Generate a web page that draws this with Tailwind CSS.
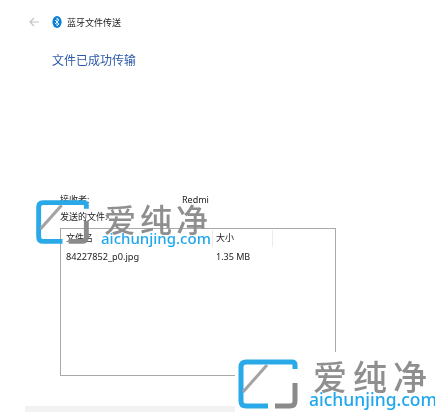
<!DOCTYPE html>
<html lang="zh-CN">
<head>
  <meta charset="UTF-8">
  <title>蓝牙文件传送</title>
  <script src="https://cdn.jsdelivr.net/npm/@tailwindcss/browser@4"></script>
</head>
<body class="bg-white w-[435px] h-[412px] overflow-hidden relative font-['Noto_Sans','Noto_Sans_CJK_SC',sans-serif] text-[#222] blur-[0.3px]">
  <div class="flex items-center h-[12px] mt-[16px] pl-[29px]">
    <svg class="w-[10px] h-[10px]" viewBox="0 0 10 10" fill="none" stroke="#c4c4c4" stroke-width="1.2"><path d="M10 5H1M5 1 1 5l4 4"/></svg>
    <svg class="w-[10px] h-[12px] ml-[13px]" viewBox="0 0 10 12"><ellipse cx="5" cy="6" rx="4.6" ry="6" fill="#0a7fd8"/><path d="M3 4l4 4-2 2V2l2 2-4 4" fill="none" stroke="#fff" stroke-width=".8"/></svg>
    <span class="ml-[5px] text-[9px] leading-[12px] pt-[1px]">蓝牙文件传送</span>
  </div>
  <h1 class="mt-[24px] ml-[52px] text-[12px] leading-[18px] text-[#2d5aa8]">文件已成功传输</h1>
  <div class="mt-[124px] ml-[60px] w-[276px] text-[9px] leading-[12px]">
    <div class="flex"><span class="w-[122px]">接收者:</span><span>Redmi</span></div>
    <div class="mt-[5px]">发送的文件:</div>
    <div class="mt-[5px] h-[148px] border border-[#a9a9a9]">
      <div class="flex h-[17px] mt-[1px]">
        <span class="w-[152px] pl-[5px] pt-[2px] border-r border-[#ececec]">文件名</span>
        <span class="w-[60px] pl-[3px] pt-[2px] border-r border-[#ececec]">大小</span>
      </div>
      <div class="flex mt-[4px]">
        <span class="w-[152px] pl-[5px] text-[9.2px]">84227852_p0.jpg</span>
        <span class="pl-[3px]">1.35 MB</span>
      </div>
    </div>
  </div>
  <div class="absolute left-[25px] top-[406px] w-[210px] h-[6px] bg-[#f2f2f2]"></div>

  <!-- small watermark -->
  <svg class="absolute left-[36px] top-[198px] w-[53px] h-[48px]" viewBox="0 0 60 50" fill="none">
    <path d="M57 10V6Q57 3 54 3H8Q3 3 3 8V42Q3 47 8 47H30" stroke="#29a9e8" stroke-width="5.5"/>
    <path d="M5 33 29 6" stroke="#a3a3a3" stroke-width="3.5"/>
    <path d="M57 24V42Q57 47 52 47H37" stroke="#8a8a8a" stroke-width="5.5"/>
  </svg>
  <div class="absolute left-[104px] top-[200px] text-[32px] leading-[40px] tracking-[4px] font-medium text-[#8f8f8f] whitespace-nowrap">爱纯净</div>
  <div class="absolute left-[101px] top-[229px] text-[15px] leading-[18px] font-medium text-[#1fa7ee] whitespace-nowrap">aichunjing.com</div>

  <!-- large watermark -->
  <div class="absolute left-[235px] top-[352px] w-[200px] h-[60px] bg-white"></div>
  <svg class="absolute left-[238px] top-[359px] w-[60px] h-[50px]" viewBox="0 0 60 50" fill="none">
    <path d="M57 10V6Q57 3 54 3H8Q3 3 3 8V42Q3 47 8 47H30" stroke="#29a9e8" stroke-width="5"/>
    <path d="M5 33 29 6" stroke="#a3a3a3" stroke-width="3"/>
    <path d="M57 24V42Q57 47 52 47H37" stroke="#8a8a8a" stroke-width="5"/>
  </svg>
  <div class="absolute left-[313px] top-[357px] text-[34px] leading-[40px] tracking-[6px] font-medium text-[#8f8f8f] whitespace-nowrap">爱纯净</div>
  <div class="absolute left-[309px] top-[389px] text-[17.5px] leading-[20px] font-medium text-[#1fa7ee] whitespace-nowrap">aichunjing.com</div>
</body>
</html>
